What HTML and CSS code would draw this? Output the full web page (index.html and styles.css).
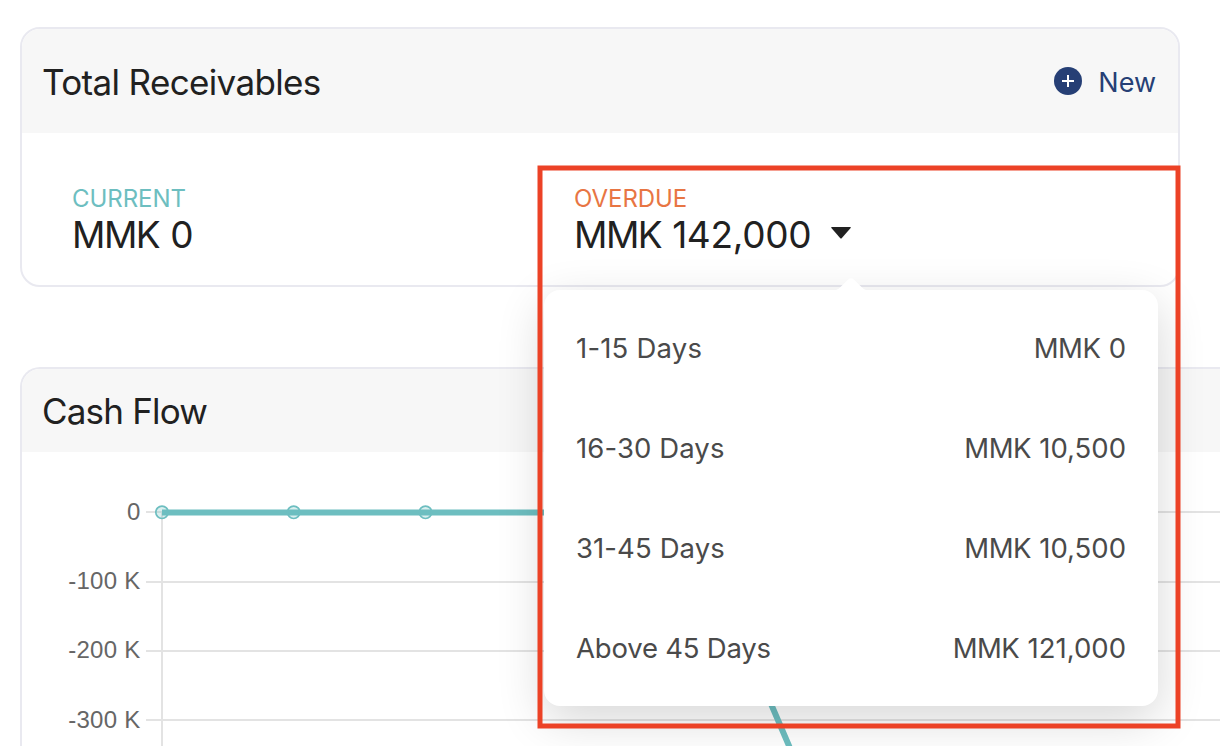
FILE: index.html
```
<!DOCTYPE html>
<html lang="en">
<head>
<meta charset="utf-8">
<title>Dashboard</title>
<link rel="stylesheet" href="styles.css">
</head>
<body>
<main class="dashboard">
  <section class="card receivables">
    <header class="card-header receivables-header">
      <h2 class="card-title">Total Receivables</h2>
      <a class="new-link">
        <svg class="plus-icon" viewBox="0 0 28 28"><circle cx="14" cy="14" r="14" fill="#263f75"/><path d="M14 8v12M8 14h12" stroke="#fff" stroke-width="2"/></svg>
        <span>New</span>
      </a>
    </header>
    <div class="totals">
      <div class="total">
        <div class="label current">CURRENT</div>
        <div class="amount"><div><span class="currency">MMK </span>0</div></div>
      </div>
      <div class="total">
        <div class="label overdue">OVERDUE</div>
        <div class="amount"><div><span class="currency">MMK </span>142,000</div>
          <svg class="caret" viewBox="0 0 20 12"><path d="M.8 0h18.400q1 0 .4.900l-8.900 10.300q-.7.700-1.400 0L.4.900Q-.2 0 .8 0z" fill="#212121"/></svg>
        </div>
      </div>
    </div>
  </section>

  <section class="card cash-flow">
    <header class="card-header cash-header"><h2 class="card-title cash-title">Cash Flow</h2></header>
    <div class="chart">
      <div class="axis">
        <span>0</span><span>-100 K</span><span>-200 K</span><span>-300 K</span>
      </div>
      <svg class="plot" viewBox="146 452 1074 294">
        <g stroke="#e3e3e3" stroke-width="2">
          <path d="M146 512H1220M146 582H1220M146 651H1220M146 720H1220M162 512V746"/>
        </g>
        <path d="M162 512.500H689L820.800 820" fill="none" stroke="#6dbec0" stroke-width="6"/>
        <g fill="#6dbec0" fill-opacity=".25" stroke="#6dbec0" stroke-width="1.700">
          <circle cx="162" cy="512.300" r="6.200"/><circle cx="293.700" cy="512.300" r="6.200"/><circle cx="425.500" cy="512.300" r="6.200"/>
        </g>
      </svg>
    </div>
  </section>
</main>

<div class="popover">
  <svg class="arrow" viewBox="0 0 30 12"><path d="M0 12Q2.500 11 4 9.500L12.500 1.200Q15-.8 17.500 1.200L26 9.500Q27.500 11 30 12z" fill="#fff"/></svg>
  <div class="row"><span class="range range-first">1-15 Days</span><span><span class="unit">MMK </span>0</span></div>
  <div class="row"><span class="range">16-30 Days</span><span><span class="unit">MMK </span>10,500</span></div>
  <div class="row"><span class="range">31-45 Days</span><span><span class="unit">MMK </span>10,500</span></div>
  <div class="row"><span class="range range-last">Above 45 Days</span><span><span class="unit">MMK </span>121,000</span></div>
</div>
<svg class="highlight" viewBox="0 0 644 564"><rect x="3" y="3" width="638" height="558" fill="none" stroke="#ec4226" stroke-width="5"/></svg>
</body>
</html>
```
FILE: styles.css
```
* { box-sizing: border-box; }
body {
  margin: 0;
  width: 1220px;
  height: 746px;
  overflow: hidden;
  position: relative;
  background: #fff;
  color: #212121;
  font-family: Inter, "Liberation Sans", sans-serif;
}
.dashboard {
  display: flex;
  flex-direction: column;
  gap: 80px;
  padding: 27px 0 0 20px;
}
.card {
  flex: none;
  border: 2px solid #e9e9f0;
  border-radius: 20px;
  overflow: hidden;
}
.receivables { width: 1160px; height: 260px; }
.card-header {
  display: flex;
  align-items: center;
  justify-content: space-between;
  background: #f7f7f7;
  padding: 0 22px 0 20px;
}
.receivables-header { height: 104px; padding-top: 2px; }
.card-title {
  margin: 0;
  font-size: 35px;
  line-height: 44px;
  font-weight: 400;
  letter-spacing: -0.65px;
  white-space: nowrap;
}
.cash-title { letter-spacing: -0.8px; }
.new-link {
  display: flex;
  align-items: center;
  gap: 16px;
  padding-top: 2px;
  color: #263f75;
  font-size: 27px;
  line-height: 34px;
}
.plus-icon { width: 28px; height: 28px; margin-top: -4px; }
.totals {
  display: grid;
  grid-template-columns: 502px 1fr;
  padding: 51px 0 0 50px;
}
.label { font-size: 24px; line-height: 29px; letter-spacing: -0.05px; white-space: nowrap; }
.current { color: #6dbec0; }
.overdue { color: #e87543; }
.amount {
  display: flex;
  align-items: center;
  gap: 20px;
  font-size: 37px;
  line-height: 44px;
  letter-spacing: -0.3px;
  white-space: nowrap;
}
.currency { letter-spacing: -1.5px; word-spacing: 2px; }
.caret { width: 20px; height: 12px; margin-top: -4px; }
.cash-flow {
  width: 1200px;
  height: 379px;
  border-right: 0;
  border-bottom: 0;
  border-radius: 20px 0 0 0;
}
.cash-header { height: 83px; padding-top: 0; }
.chart { display: flex; }
.axis {
  display: flex;
  flex-direction: column;
  width: 118.5px;
  margin-right: 5.5px;
  padding-top: 25px;
  text-align: right;
  color: #666;
  font: 24px/69.2px "Liberation Sans", sans-serif;
  letter-spacing: 0.25px;
}
.plot { flex: none; width: 1074px; height: 294px; }
.popover {
  position: absolute;
  left: 544px;
  top: 290px;
  width: 614px;
  height: 416px;
  padding: 8px 32px;
  border-radius: 16px;
  background: #fff;
  box-shadow: 0 14px 48px rgba(0, 0, 0, .16);
}
.arrow { position: absolute; left: 292px; top: -12px; width: 30px; height: 12px; }
.row {
  display: flex;
  align-items: center;
  justify-content: space-between;
  height: 100px;
  color: #4a4a4a;
  font-size: 27.5px;
  white-space: nowrap;
}
.range { letter-spacing: 0.1px; }
.range-first { letter-spacing: 0.2px; }
.range-last { letter-spacing: -0.2px; }
.unit { letter-spacing: -0.5px; word-spacing: 1px; }
.highlight { position: absolute; left: 537px; top: 165px; width: 644px; height: 564px; }
```
